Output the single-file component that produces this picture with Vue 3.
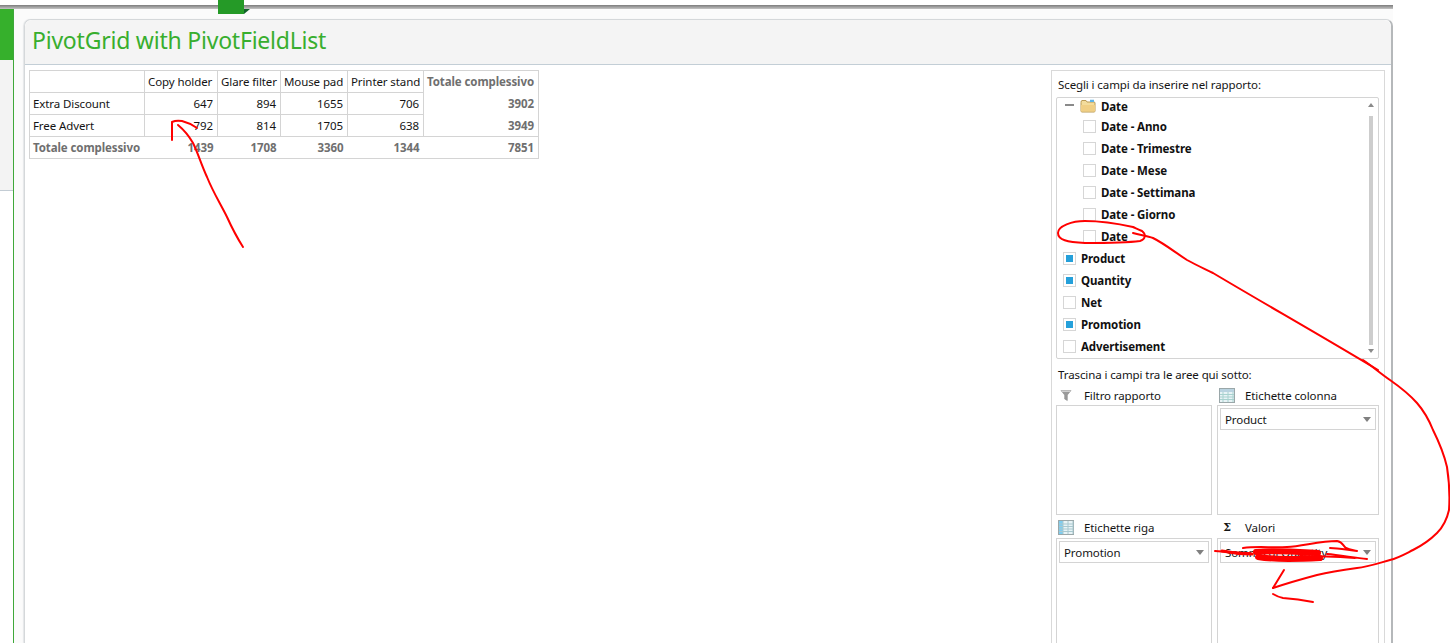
<script setup>
const cols = ['Copy holder', 'Glare filter', 'Mouse pad', 'Printer stand']
const rows = [
  { name: 'Extra Discount', values: [647, 894, 1655, 706], total: 3902 },
  { name: 'Free Advert', values: [792, 814, 1705, 638], total: 3949 },
]
const totals = [1439, 1708, 3360, 1344]
const children = ['Date - Anno', 'Date - Trimestre', 'Date - Mese', 'Date - Settimana', 'Date - Giorno', 'Date']
const fields = [
  { name: 'Product', on: true },
  { name: 'Quantity', on: true },
  { name: 'Net', on: false },
  { name: 'Promotion', on: true },
  { name: 'Advertisement', on: false },
]
const gridCells = [3, 8, 13]
</script>

<template>
  <div class="page">
    <div class="topbar"></div>
    <div class="flag"></div>
    <div class="main">
      <aside class="rail">
        <div class="rail-green"></div>
        <div class="rail-gray"></div>
      </aside>
      <section class="card">
        <header class="card-head">
          <h1>PivotGrid with PivotFieldList</h1>
        </header>
        <div class="card-body">
          <table class="pivot">
            <colgroup>
              <col class="c0" /><col class="c1" /><col class="c2" /><col class="c3" /><col class="c4" /><col class="c5" />
            </colgroup>
            <tbody>
              <tr>
                <td class="cell"></td>
                <td v-for="c in cols" :key="c" class="cell head">{{ c }}</td>
                <td class="grand head">Totale complessivo</td>
              </tr>
              <tr v-for="r in rows" :key="r.name">
                <td class="cell">{{ r.name }}</td>
                <td v-for="(v, i) in r.values" :key="i" class="cell num">{{ v }}</td>
                <td class="grand num">{{ r.total }}</td>
              </tr>
              <tr class="total-row">
                <td class="grand">Totale complessivo</td>
                <td v-for="t in totals" :key="t" class="grand num">{{ t }}</td>
                <td class="grand num">7851</td>
              </tr>
            </tbody>
          </table>

          <div class="panel">
            <div class="panel-label">Scegli i campi da inserire nel rapporto:</div>
            <div class="listbox">
              <div class="tree">
                <div class="row row-root">
                  <span class="minus"></span>
                  <svg class="folder" width="16" height="14" viewBox="0 0 16 14">
                    <path d="M1 3.5 V12 Q1 13 2 13 H14 Q15 13 15 12 V4 Q15 3 14 3 H7 L6 1.5 H2 Q1 1.5 1 3.5Z" fill="#f3dc9c" stroke="#b99a55" stroke-width="1" />
                    <path d="M1 6 H15 V12.5 H1Z" fill="#f0cf85" />
                    <path d="M10 0.8 H14 V3 H10Z" fill="#5fb4e8" />
                  </svg>
                  <b>Date</b>
                </div>
                <div v-for="c in children" :key="c" class="row row-child">
                  <span class="check"></span><b>{{ c }}</b>
                </div>
                <div v-for="f in fields" :key="f.name" class="row row-field">
                  <span class="check" :class="{ on: f.on }"></span><b>{{ f.name }}</b>
                </div>
              </div>
              <div class="scroll">
                <span class="arrow-up"></span>
                <span class="thumb"></span>
                <span class="arrow-down"></span>
              </div>
            </div>
            <div class="panel-label second">Trascina i campi tra le aree qui sotto:</div>
            <div class="zones">
              <div class="zone-head filter-head">
                <svg class="ic-filter" width="12" height="13" viewBox="0 0 12 13">
                  <path d="M1 1.5 H11 L7.3 6 V11.5 L4.7 10 V6Z" fill="#9a9a9a" stroke="#8a8a8a" stroke-width=".6" />
                  <path d="M1 1.5 H11 L10 3 H2Z" fill="#cfcfcf" />
                </svg>
                <span>Filtro rapporto</span>
              </div>
              <div class="zone-head">
                <svg class="ic-table" width="16" height="15" viewBox="0 0 16 15">
                  <rect x=".5" y=".5" width="15" height="14" fill="#e8f3f6" stroke="#9aa7a9" />
                  <rect x="1" y="1" width="14" height="3" fill="#b9d3e0" />
                  <path v-for="x in gridCells" :key="x" :d="`M${x + 1} 4 V14`" stroke="#a8d2cf" stroke-width="1" />
                  <path d="M1 6.5 H15 M1 9 H15 M1 11.5 H15" stroke="#a8d2cf" stroke-width="1" />
                </svg>
                <span>Etichette colonna</span>
              </div>
              <div class="box"></div>
              <div class="box">
                <div class="combo"><span>Product</span><i></i></div>
              </div>
              <div class="zone-head low">
                <svg class="ic-table" width="16" height="15" viewBox="0 0 16 15">
                  <rect x=".5" y=".5" width="15" height="14" fill="#e8f3f6" stroke="#9aa7a9" />
                  <rect x="1" y="1" width="4" height="13" fill="#7fcdf0" />
                  <path v-for="x in gridCells" :key="x" :d="`M${x + 2} 1 V14`" stroke="#a8c8cf" stroke-width="1" />
                  <path d="M1 4 H15 M1 6.5 H15 M1 9 H15 M1 11.5 H15" stroke="#a8c8cf" stroke-width="1" />
                </svg>
                <span>Etichette riga</span>
              </div>
              <div class="zone-head low">
                <span class="sigma">Σ</span>
                <span>Valori</span>
              </div>
              <div class="box">
                <div class="combo"><span>Promotion</span><i></i></div>
              </div>
              <div class="box">
                <div class="combo"><span>Somma di Quantity</span><i></i></div>
              </div>
            </div>
          </div>
        </div>
      </section>
    </div>

    <svg class="ink" width="1450" height="643" viewBox="0 0 1450 643" fill="none" stroke="#ff0000" stroke-width="2" stroke-linecap="round" stroke-linejoin="round">
      <path d="M243 247 C236 236 232 228 227 217 C220 203 213 192 207 177 C201 164 198 153 193 143 C189 136 184 130 178 125" />
      <path d="M172 140 L172 122 Q176 120 182 121 Q190 123 197 128" />
      <path d="M1133 227 C1115 223 1100 221 1085 221 C1072 221 1058 226 1058 233 C1058 240 1067 242 1085 243 C1105 243 1125 243 1140 241 C1146 239 1146 234 1142 231 C1138 229 1135 228 1133 227" />
      <path d="M1133 233 C1140 235 1147 236 1153 238 C1165 244 1176 253 1187 260 C1196 265 1205 269 1213 273 C1265 304 1320 335 1378 370" />
      <path d="M1363 360 C1372 366 1381 374 1390 380 C1400 387 1409 394 1417 403 C1424 411 1429 420 1433 430 C1439 442 1444 454 1447 467 C1449 480 1450 495 1449 510 C1447 519 1443 527 1437 533 C1430 540 1421 546 1413 550 C1405 554 1398 558 1390 560 C1379 563 1368 567 1357 568 C1343 570 1330 572 1317 575 C1302 579 1288 583 1273 588" />
      <path d="M1273 588 L1284 570" />
      <path d="M1273 594 Q1278 597 1283 598 Q1298 599 1313 602" />
      <path d="M1215 551 C1228 552 1240 553 1250 553 M1243 548 C1258 546 1272 548 1287 547 C1303 546 1320 541 1337 541 C1343 542 1343 546 1346 548 C1350 550 1353 550 1357 551 M1330 548 C1338 548 1348 550 1357 551 M1327 554 C1340 555 1355 558 1367 559 M1300 556 C1320 556 1340 557 1355 558" />
      <path d="M1222 551 C1232 553 1242 554 1252 554" stroke-width="3" />
      <path d="M1256 552 C1275 550 1300 552 1318 553 M1258 557 C1275 560 1300 559 1320 558" stroke-width="6" />
    </svg>
  </div>
</template>

<style scoped>
.page {
  position: relative;
  display: flex;
  flex-direction: column;
  width: 1450px;
  height: 643px;
  overflow: hidden;
  background: #fff;
  color: #141414;
  font-family: "Noto Sans", "Open Sans", sans-serif;
  font-size: 11.5px;
  letter-spacing: -0.1px;
}
.topbar {
  flex: none;
  width: 1393px;
  height: 4px;
  margin-top: 5px;
  background: linear-gradient(#7c7c7c, #c4c4c4);
}
.flag {
  position: absolute;
  left: 218px;
  top: 0;
  width: 26px;
  height: 14px;
  background: #259a27;
}
.flag::after {
  content: "";
  position: absolute;
  left: 26px;
  top: 9px;
  border-top: 5px solid #12622a;
  border-right: 6px solid transparent;
}
.main {
  flex: 1;
  display: flex;
  width: 1393px;
  min-height: 0;
  background: #fbfbfb;
}
.rail {
  flex: none;
  width: 13px;
  border-right: 1px solid #3fa83a;
  background: #fff;
}
.rail-green {
  height: 51px;
  background: #36b02c;
}
.rail-gray {
  height: 130px;
  background: #f3f3f3;
  border-bottom: 1px solid #c3ccd4;
}
.card {
  flex: 1;
  display: flex;
  flex-direction: column;
  min-width: 0;
  margin: 10px 0 0 10px;
  border: 1px solid #d5d8da;
  border-right: 2px solid #b5b8ba;
  border-bottom: 0;
  border-radius: 7px 7px 0 0;
  background: #fff;
  box-shadow: -1px 0 1px #e4e6e8;
}
.card-head {
  flex: none;
  height: 44px;
  padding-left: 7px;
  border-bottom: 1px solid #c3ced6;
  border-radius: 7px 7px 0 0;
  background: #f4f4f4;
}
.card-head h1 {
  margin: 0;
  font-size: 23px;
  font-weight: 400;
  letter-spacing: -0.22px;
  line-height: 41px;
  color: #38ae2e;
}
.card-body {
  flex: 1;
  display: flex;
  justify-content: space-between;
  align-items: flex-start;
  min-height: 0;
  padding: 5px 6px 0 4px;
}
.pivot {
  flex: none;
  width: 509px;
  table-layout: fixed;
  border-collapse: collapse;
  border: 1px solid #d4d4d4;
  line-height: 21px;
}
.c0 { width: 115px; }
.c1 { width: 73px; }
.c2 { width: 63px; }
.c3 { width: 67px; }
.c4 { width: 76px; }
.c5 { width: 115px; }
.pivot td {
  height: 21px;
  padding: 0 4px 0 3px;
  white-space: nowrap;
}
.cell {
  border: 1px solid #d4d4d4;
}
.num {
  text-align: right;
}
.grand {
  font-weight: 700;
  color: #6f6f6f;
}
.grand.head {
  border-left: 1px solid #d4d4d4;
}
.total-row {
  border-top: 1px solid #d4d4d4;
}
.panel {
  flex: none;
  width: 323px;
  height: 600px;
  padding: 0 5px 0 4px;
  border: 1px solid #d9d9d9;
  border-bottom: 0;
  overflow: hidden;
}
.panel-label {
  height: 26px;
  padding-left: 2px;
  line-height: 28px;
}
.panel-label.second {
  height: 27px;
  line-height: 32px;
}
.listbox {
  position: relative;
  display: flex;
  height: 260px;
  border: 1px solid #d4d4d4;
  border-radius: 2px;
  overflow: hidden;
}
.tree {
  flex: 1;
  min-width: 0;
}
.row {
  display: flex;
  align-items: center;
  height: 22px;
}
.row b {
  font-weight: 700;
  color: #111;
}
.row-root {
  height: 18px;
  margin-top: -1px;
  padding-left: 8px;
}
.minus {
  width: 9px;
  height: 2px;
  margin-top: -3px;
  margin-right: 6px;
  background: #8a8a8a;
}
.folder {
  margin-right: 5px;
  margin-top: -1px;
}
.row-child {
  padding-left: 26px;
}
.row-field {
  padding-left: 6px;
}
.check {
  flex: none;
  position: relative;
  box-sizing: border-box;
  width: 13px;
  height: 13px;
  margin-right: 5px;
  border: 1px solid #d6d6d6;
  background: #fff;
}
.check.on::after {
  content: "";
  position: absolute;
  inset: 2px;
  background: #25a0da;
}
.scroll {
  flex: none;
  display: flex;
  flex-direction: column;
  align-items: center;
  width: 9px;
  margin-right: 3px;
  padding-top: 5px;
  box-sizing: border-box;
}
.thumb {
  width: 4px;
  height: 229px;
  margin: 9px 0 4px;
  background: #cdcdcd;
}
.arrow-up {
  border-left: 3px solid transparent;
  border-right: 3px solid transparent;
  border-bottom: 4px solid #8a8a8a;
}
.arrow-down {
  border-left: 3px solid transparent;
  border-right: 3px solid transparent;
  border-top: 4px solid #8a8a8a;
}
.zones {
  display: grid;
  grid-template-columns: 156px 162px;
  grid-template-rows: 19px 110px 23px 200px;
  column-gap: 5px;
}
.zone-head {
  display: flex;
  align-items: center;
  gap: 10px;
  padding-left: 2px;
}
.zone-head.low {
  padding-top: 1px;
}
.filter-head {
  padding-left: 4px;
}
.ic-filter {
  margin-right: 2px;
}
.sigma {
  width: 16px;
  text-align: center;
  font-family: "DejaVu Serif", serif;
  font-weight: 700;
  font-size: 11px;
}
.box {
  border: 1px solid #d4d4d4;
  padding: 2px;
}
.combo {
  display: flex;
  align-items: center;
  justify-content: space-between;
  box-sizing: border-box;
  height: 22px;
  padding: 0 3px 0 4px;
  border: 1px solid #d4d4d4;
}
.combo i {
  width: 0;
  height: 0;
  margin-right: 1px;
  border-left: 4px solid transparent;
  border-right: 4px solid transparent;
  border-top: 5px solid #808080;
}
.ink {
  position: absolute;
  left: 0;
  top: 0;
  pointer-events: none;
}
</style>
